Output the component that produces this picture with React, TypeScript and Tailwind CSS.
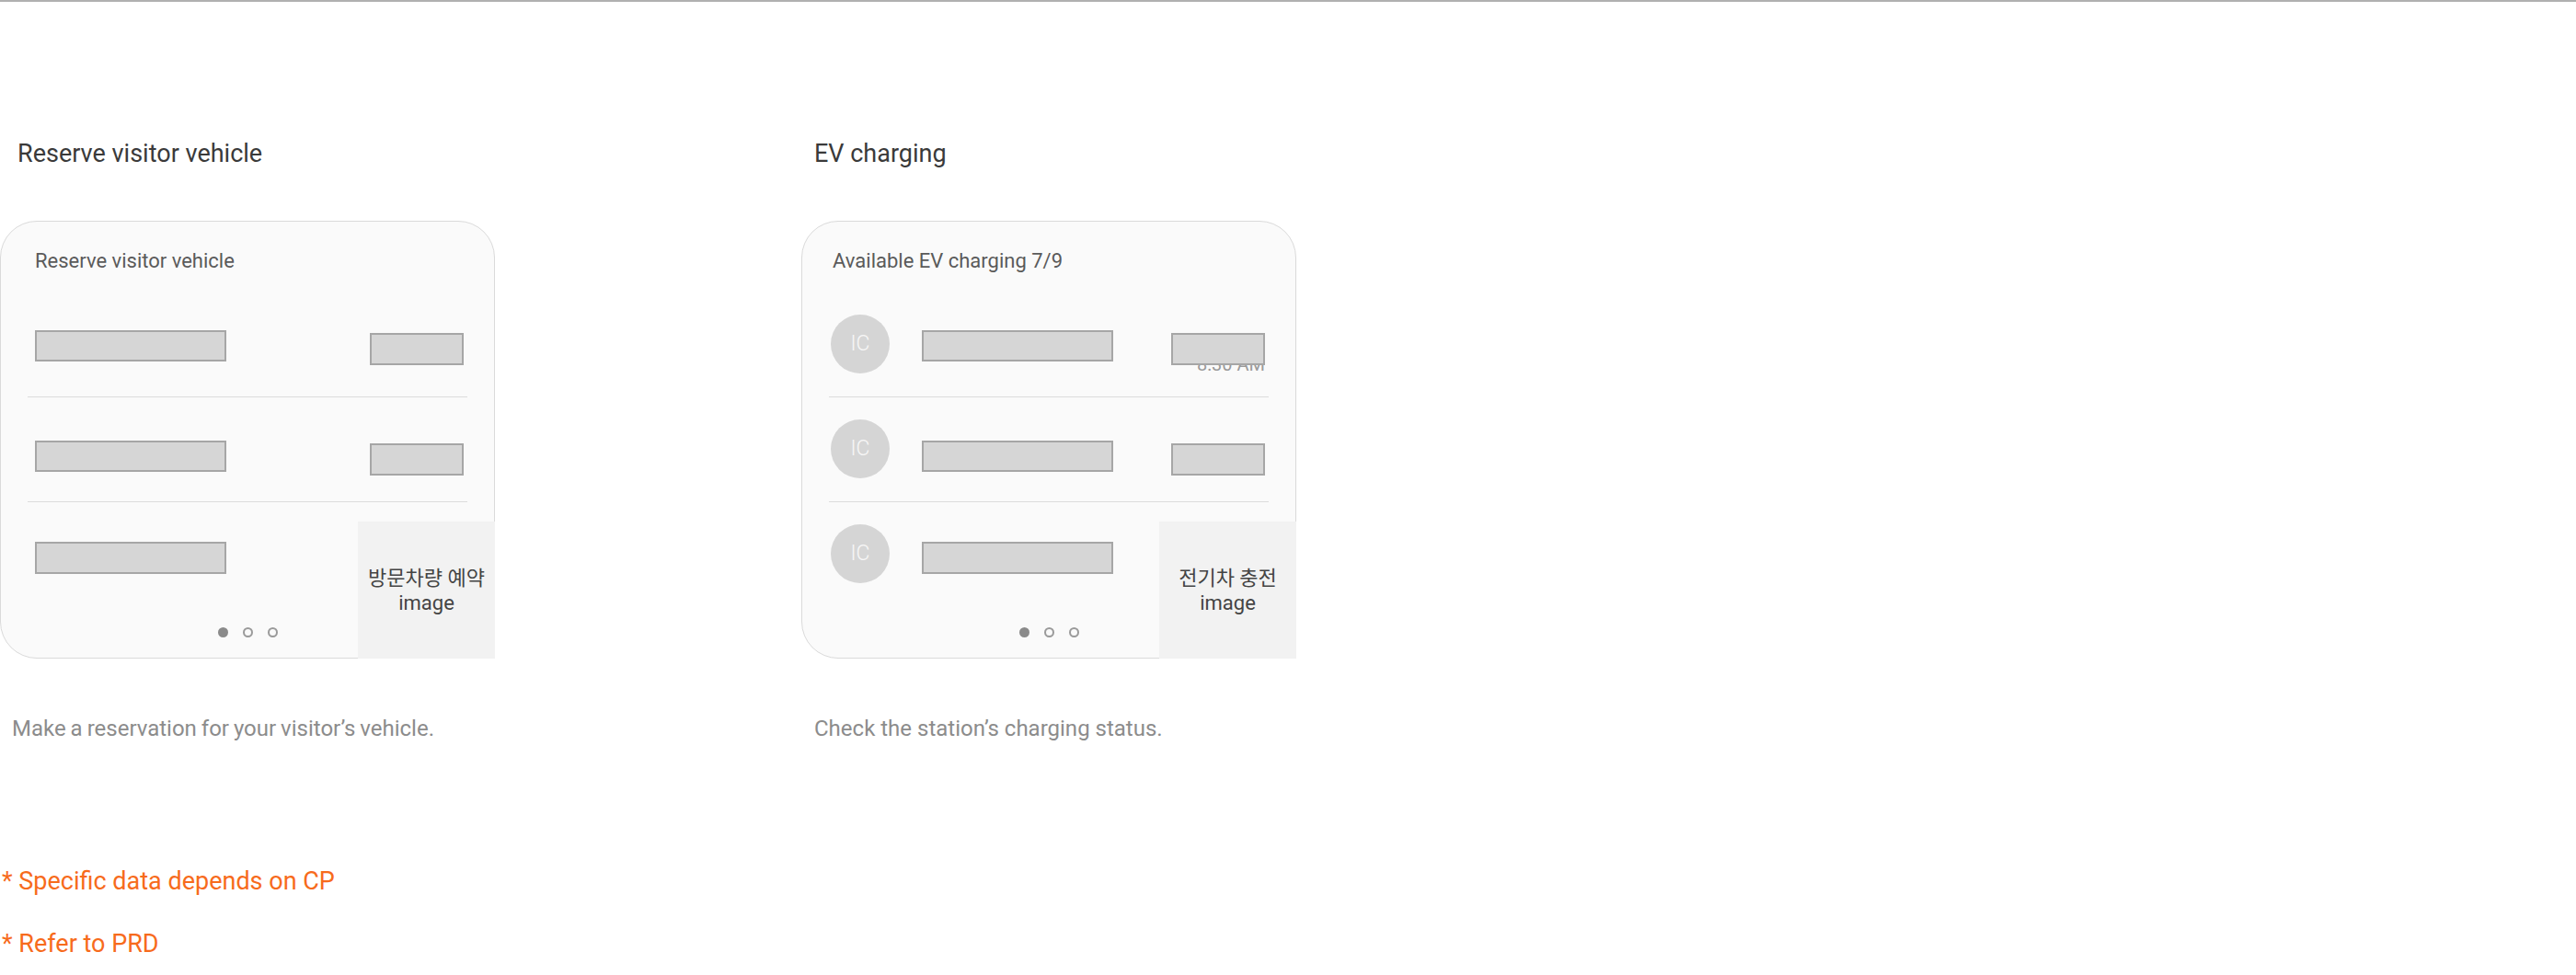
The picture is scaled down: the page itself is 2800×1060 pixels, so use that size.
import React from "react";

const Bar = ({ className = "" }: { className?: string }) => (
  <div className={`box-border border-2 border-[#a6a6a6] bg-[#d6d6d6] ${className}`} />
);

const Divider = () => <div className="h-px bg-[#dcdcdc]" />;

const Circle = ({ className = "" }: { className?: string }) => (
  <div
    className={`flex h-[64px] w-[64px] shrink-0 items-center justify-center rounded-full bg-[#d5d5d5] text-[23px] font-light text-[#f7f7f7] ${className}`}
  >
    IC
  </div>
);

const Dots = () => (
  <div className="mt-[22px] flex justify-center gap-[16px]">
    <div className="box-border h-[11px] w-[11px] rounded-full bg-[#8a8a8a]" />
    <div className="box-border h-[11px] w-[11px] rounded-full border-2 border-[#9a9a9a]" />
    <div className="box-border h-[11px] w-[11px] rounded-full border-2 border-[#9a9a9a]" />
  </div>
);

const ImageBox = ({ label }: { label: string }) => (
  <div className="absolute right-[-1px] bottom-[-1px] flex h-[149px] w-[149px] flex-col items-center justify-center bg-[#f2f2f2] text-center text-[22px] leading-[27px] text-[#444444]">
    <span>{label}</span>
    <span>image</span>
  </div>
);

function VisitorCard() {
  return (
    <div className="relative box-border h-[476px] w-[538px] rounded-[40px] border border-[#dadada] bg-[#fafafa] px-[29px] pt-[30px]">
      <div className="ml-[8px] text-[22px] leading-[26px] text-[#5a5a5a]">Reserve visitor vehicle</div>
      <div className="mt-[20px] flex h-[114px] items-start">
        <Bar className="mt-[42px] ml-[8px] h-[34px] w-[208px]" />
        <Bar className="mt-[45px] mr-[4px] ml-auto h-[35px] w-[102px]" />
      </div>
      <Divider />
      <div className="flex h-[113px] items-start">
        <Bar className="mt-[47px] ml-[8px] h-[34px] w-[208px]" />
        <Bar className="mt-[50px] mr-[4px] ml-auto h-[35px] w-[102px]" />
      </div>
      <Divider />
      <div className="flex h-[114px] items-start">
        <Bar className="mt-[43px] ml-[8px] h-[35px] w-[208px]" />
      </div>
      <Dots />
      <ImageBox label="방문차량 예약" />
    </div>
  );
}

function EvCard() {
  return (
    <div className="relative box-border h-[476px] w-[538px] rounded-[40px] border border-[#dadada] bg-[#fafafa] px-[29px] pt-[30px]">
      <div className="ml-[4px] text-[22px] leading-[26px] text-[#5a5a5a]">Available EV charging 7/9</div>
      <div className="mt-[20px] flex h-[114px] items-start">
        <Circle className="mt-[25px] ml-[2px]" />
        <Bar className="mt-[42px] ml-[35px] h-[34px] w-[208px]" />
        <div className="mt-[45px] mr-[4px] ml-auto flex flex-col items-end">
          <Bar className="relative z-10 h-[35px] w-[102px]" />
          <div className="mt-[-11px] text-[20px] leading-[20px] text-[#9a9a9a]">8:30 AM</div>
        </div>
      </div>
      <Divider />
      <div className="flex h-[113px] items-start">
        <Circle className="mt-[24px] ml-[2px]" />
        <Bar className="mt-[47px] ml-[35px] h-[34px] w-[208px]" />
        <Bar className="mt-[50px] mr-[4px] ml-auto h-[35px] w-[102px]" />
      </div>
      <Divider />
      <div className="flex h-[114px] items-start">
        <Circle className="mt-[24px] ml-[2px]" />
        <Bar className="mt-[43px] ml-[35px] h-[35px] w-[208px]" />
      </div>
      <Dots />
      <ImageBox label="전기차 충전" />
    </div>
  );
}

export default function App() {
  return (
    <div className="h-[1060px] w-[2800px] overflow-hidden bg-white font-[Roboto,'Noto_Sans_CJK_KR',sans-serif]">
      <div className="h-[2px] w-full bg-[#b0b0b0]" />
      <div className="mt-[149px] flex gap-[333px]">
        <div className="flex w-[538px] flex-col">
          <div className="pl-[19px] text-[27px] leading-[32px] text-[#3a3a3a]">Reserve visitor vehicle</div>
          <div className="mt-[57px]">
            <VisitorCard />
          </div>
          <div className="mt-[62px] pl-[13px] text-[24px] leading-[28px] text-[#8c8c8c] [word-spacing:-1px]">
            Make a reservation for your visitor’s vehicle.
          </div>
        </div>
        <div className="flex w-[538px] flex-col">
          <div className="pl-[14px] text-[27px] leading-[32px] text-[#3a3a3a]">EV charging</div>
          <div className="mt-[57px]">
            <EvCard />
          </div>
          <div className="mt-[62px] pl-[14px] text-[24px] leading-[28px] text-[#8c8c8c]">
            Check the station’s charging status.
          </div>
        </div>
      </div>
      <div className="mt-[136px] pl-[2px] text-[27px] leading-[32px] text-[#f76b1c]">* Specific data depends on CP</div>
      <div className="mt-[36px] pl-[2px] text-[27px] leading-[32px] text-[#f76b1c]">* Refer to PRD</div>
    </div>
  );
}
